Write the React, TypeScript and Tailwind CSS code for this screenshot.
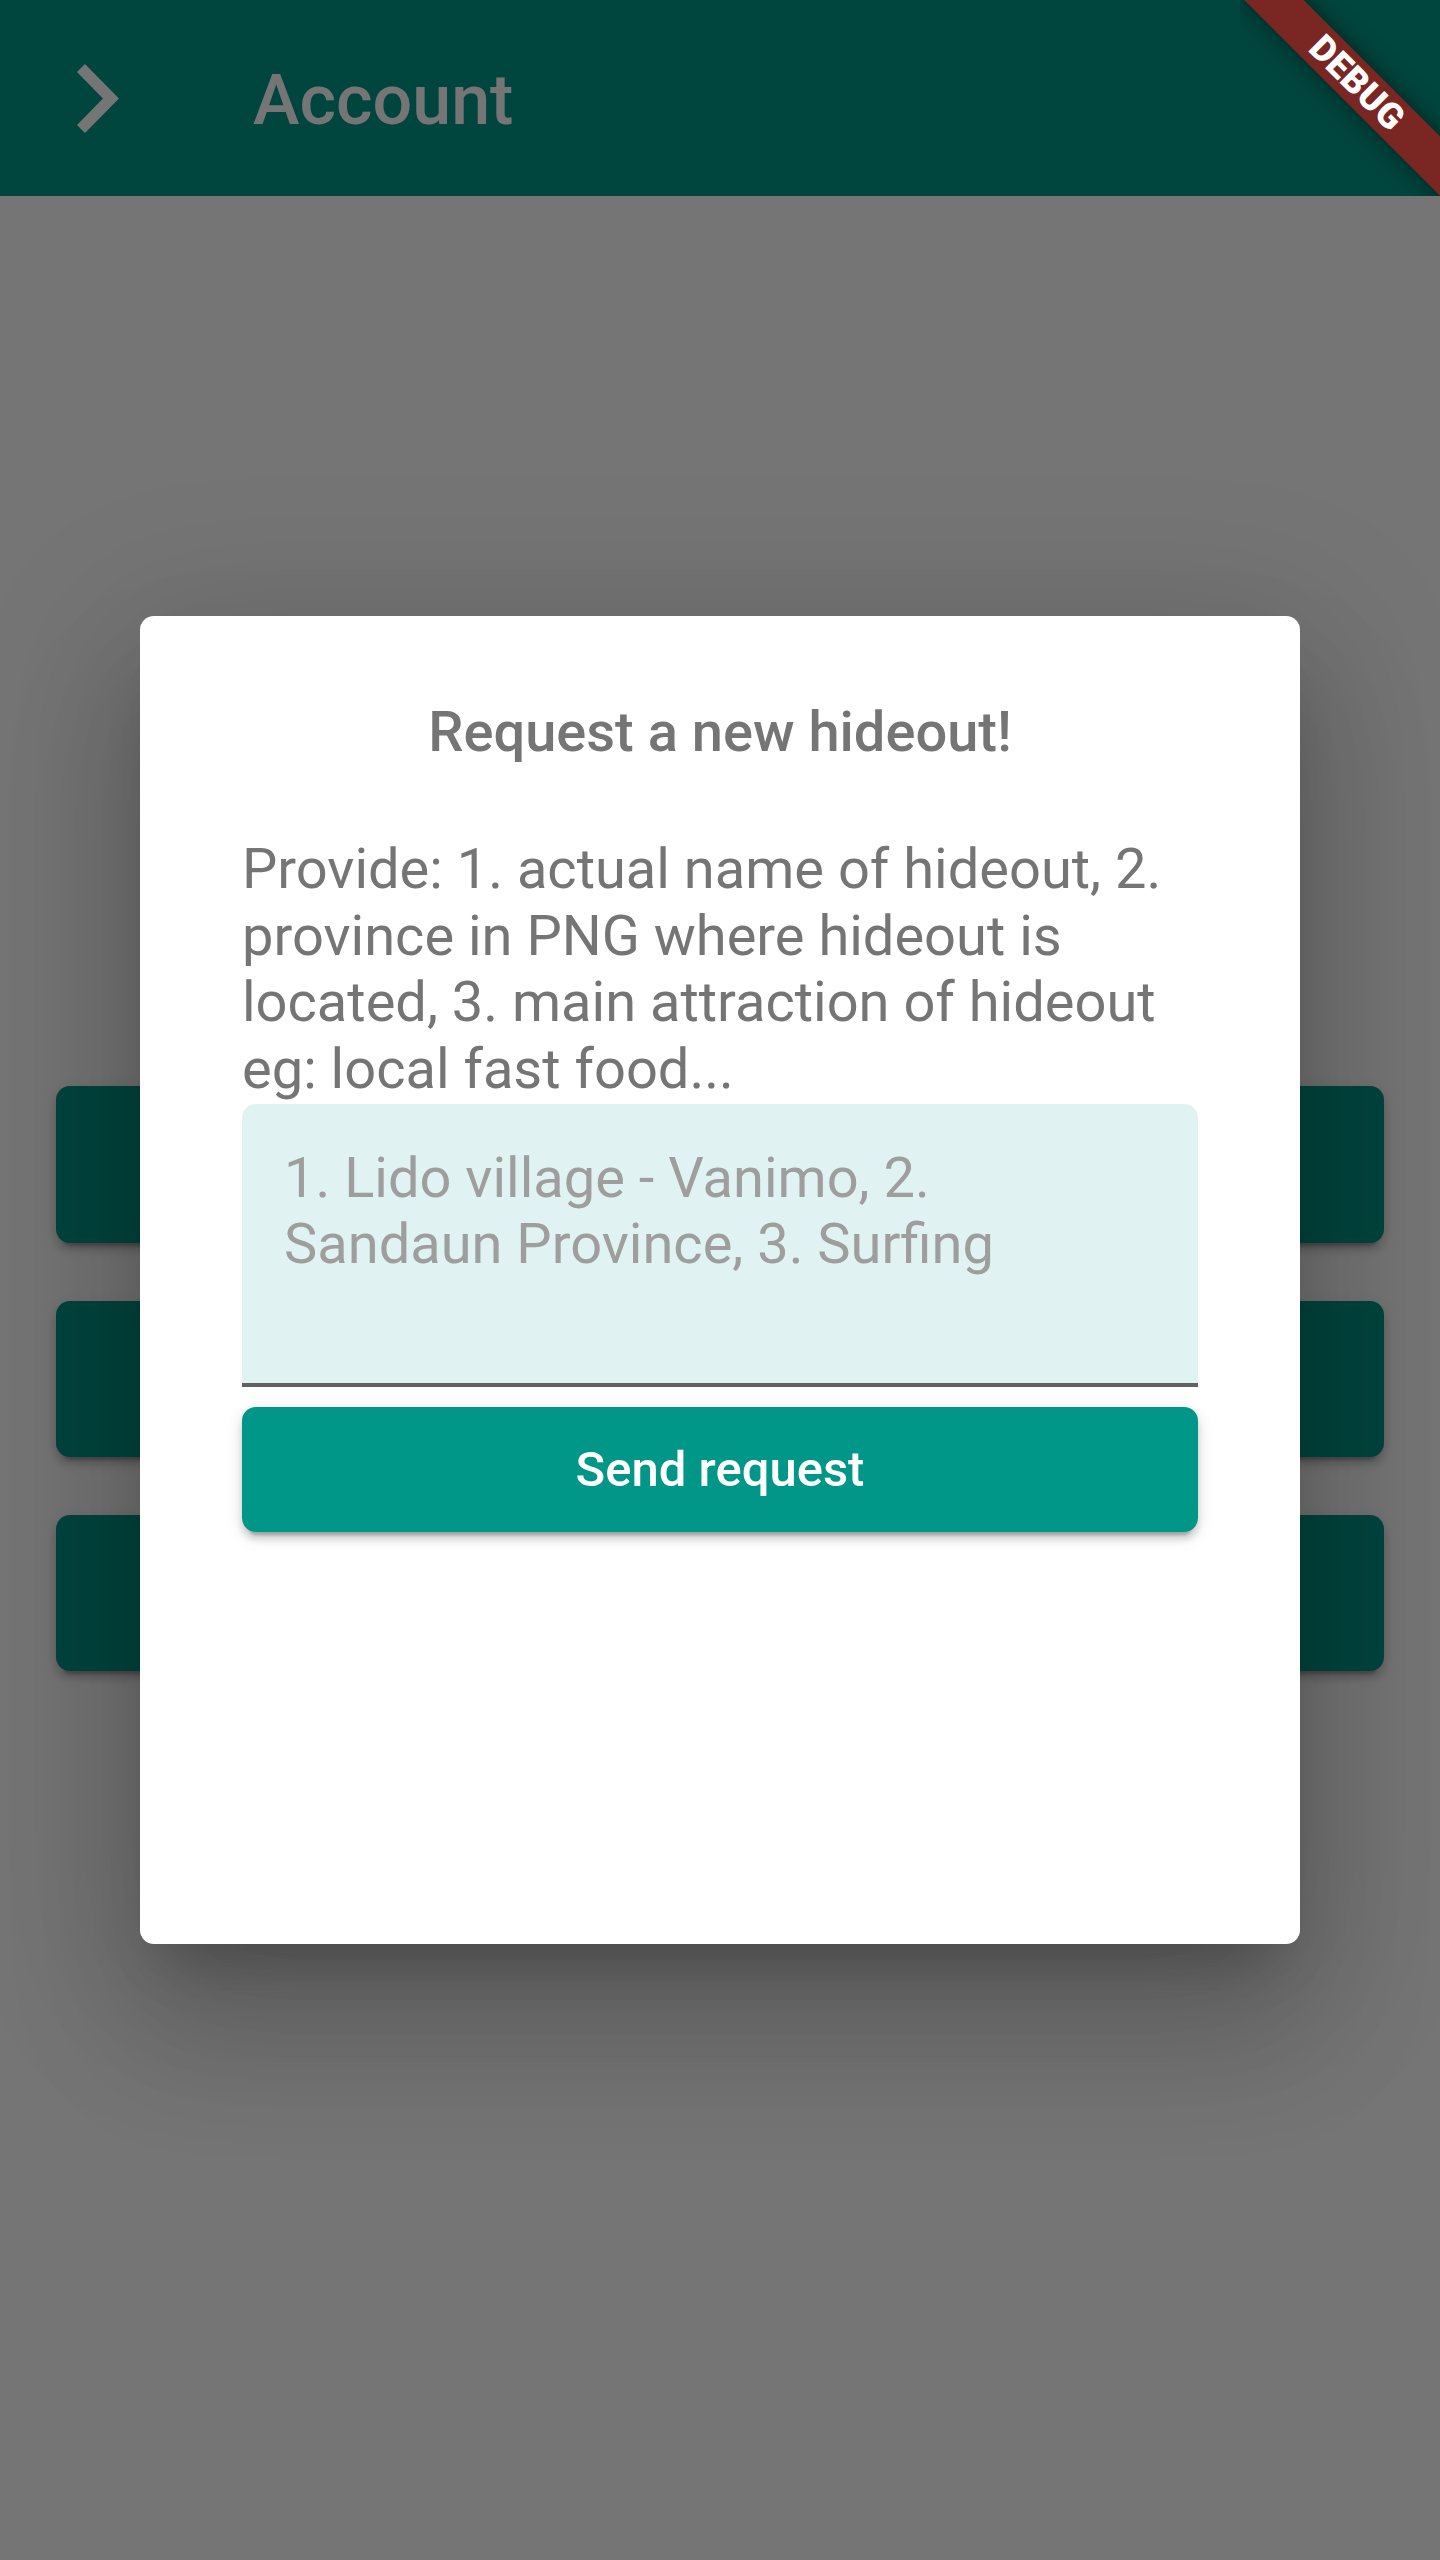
import React from "react";

export default function App() {
  return (
    <div className="relative w-[1440px] h-[2560px] overflow-hidden bg-white font-['Roboto','Noto_Sans',sans-serif]">
      {/* Underlying page */}
      <div className="flex flex-col h-full">
        <header className="h-[196px] shrink-0 bg-[#009688] flex items-center pl-[77px]">
          <svg width="42" height="69" viewBox="8.59 6 7.41 12" preserveAspectRatio="none" className="shrink-0">
            <path d="M10 6L8.59 7.41 13.17 12l-4.58 4.59L10 18l6-6z" fill="#ffffff" />
          </svg>
          <h1 className="ml-[134px] mt-[3px] text-[70px] leading-none font-medium text-white">Account</h1>
        </header>
        <main className="flex-1 flex flex-col justify-center gap-[58px] px-[56px]">
          <div className="h-[157px] rounded-[14px] bg-[#009688] shadow-[0_10px_3px_-7px_rgba(0,0,0,0.2),0_7px_7px_0_rgba(0,0,0,0.14),0_4px_17px_0_rgba(0,0,0,0.12)]" />
          <div className="h-[156px] rounded-[14px] bg-[#009688] shadow-[0_10px_3px_-7px_rgba(0,0,0,0.2),0_7px_7px_0_rgba(0,0,0,0.14),0_4px_17px_0_rgba(0,0,0,0.12)]" />
          <div className="h-[156px] rounded-[14px] bg-[#009688] shadow-[0_10px_3px_-7px_rgba(0,0,0,0.2),0_7px_7px_0_rgba(0,0,0,0.14),0_4px_17px_0_rgba(0,0,0,0.12)]" />
        </main>
      </div>

      {/* Modal barrier + dialog */}
      <div className="absolute inset-0 bg-[rgba(0,0,0,0.54)] flex items-center justify-center px-[140px]">
        <div className="w-full h-[1328px] bg-white rounded-[14px] flex flex-col pt-[83px] px-[102px] shadow-[0_38px_52px_-24px_rgba(0,0,0,0.2),0_84px_133px_10px_rgba(0,0,0,0.14),0_31px_161px_28px_rgba(0,0,0,0.12)]">
          <h2 className="text-center text-[56px] leading-[66px] font-medium text-[#757575]">
            Request a new hideout!
          </h2>
          <p className="mt-[71px] text-[56px] leading-[66.5px] text-[#757575]">
            Provide: 1. actual name of hideout, 2. province in PNG where hideout is located, 3. main attraction of hideout eg: local fast food...
          </p>
          <div className="mt-[2px] h-[283px] bg-[#e0f2f1] rounded-t-[14px] border-b-[4px] border-[#616161] flex">
            <textarea
              className="w-full h-full bg-transparent resize-none outline-none px-[42px] pt-[42px] text-[56px] leading-[65.5px] text-[#616161] placeholder:text-[#9e9e9e] font-['Roboto',sans-serif]"
              placeholder={"1. Lido village - Vanimo, 2.\nSandaun Province, 3. Surfing"}
            />
          </div>
          <button className="mt-[20px] h-[125px] w-full rounded-[14px] bg-[#009688] text-white text-[49px] font-medium shadow-[0_10px_3px_-7px_rgba(0,0,0,0.2),0_7px_7px_0_rgba(0,0,0,0.14),0_4px_17px_0_rgba(0,0,0,0.12)]">
            Send request
          </button>
        </div>
      </div>

      {/* Debug banner */}
      <div className="absolute top-0 right-0 w-[200px] h-[196px] overflow-hidden pointer-events-none">
        <div className="absolute left-[-33px] top-[62px] w-[300px] h-[42px] rotate-45 bg-[#7a2622] shadow-[0_0_21px_rgba(0,0,0,0.5)] flex items-center justify-center">
          <span className="text-white text-[36px] leading-none font-black tracking-[0.5px]">DEBUG</span>
        </div>
      </div>
    </div>
  );
}
